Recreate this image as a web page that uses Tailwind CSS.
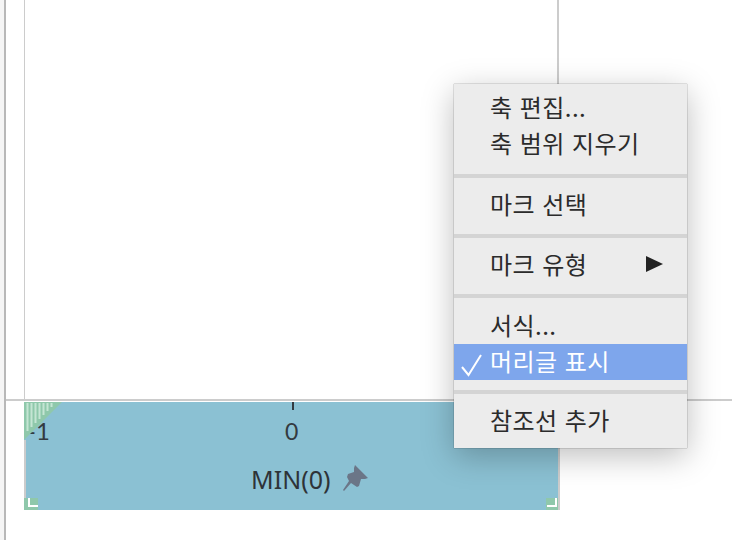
<!DOCTYPE html>
<html lang="ko">
<head>
    <meta charset="UTF-8" />
    <title>Axis menu</title>
    <script src="https://cdn.jsdelivr.net/npm/@tailwindcss/browser@4"></script>
</head>
<body class="bg-white">
    <div class="relative w-[732px] h-[540px] overflow-hidden flex bg-white font-['Noto_Sans_CJK_KR','Noto_Sans',sans-serif]">
        <!-- left pane edge -->
        <div class="w-[6px] h-full shrink-0 bg-[#f5f5f5] border-r-2 border-[#b8b8b8]"></div>

        <div class="flex-1 flex flex-col">
            <!-- plot area -->
            <div class="h-[399px] shrink-0 pl-[18px]">
                <div class="w-[535px] h-full border-l border-r-2 border-[#cccccc] bg-white"></div>
            </div>
            <div class="h-[2px] shrink-0 bg-[#cccccc]"></div>
            <div class="h-px shrink-0"></div>

            <!-- axis band -->
            <div class="pl-[18px]">
                <div class="relative w-[536px] h-[108px] bg-[#8bc1d3] border-r-2 border-[#cccccc] text-[#333a40]">
                    <!-- ticks -->
                    <div class="absolute left-[268px] top-0 w-[2px] h-[8px] bg-[#333a40]"></div>
                    <div class="absolute left-[3px] top-[14px] font-['Lato'] text-[24px] leading-[30px]">-1</div>
                    <div class="absolute left-[261px] top-[14px] font-['Lato'] text-[23px] leading-[30px]">0</div>
                    <!-- selected corner, sits over the -1 label -->
                    <svg class="absolute left-0 top-0" width="38" height="38" viewBox="0 0 38 38">
                        <path d="M0 0H38L0 38Z" fill="#8fc8ab" />
                        <path d="M3.500 1V29M7.500 1V25M11.500 1V21M15.500 1V17M19.500 1V13M23.500 1V9M27.500 1V5" stroke="#c5e5d4" stroke-width="2" fill="none" />
                    </svg>
                    <div class="absolute left-0 top-[38px] w-[2px] h-[58px] bg-[#cccccc]"></div>
                    <!-- axis title -->
                    <div class="absolute left-[227px] top-[60px] flex items-center gap-[13px]">
                        <span class="font-['Noto_Sans'] text-[25px] leading-[34px] text-[#2e3338]">MIN(0)</span>
                        <svg class="-mt-[2px]" width="26" height="28" viewBox="13 4 26 28">
                            <path d="M25 5 38 18 35 19 31 19 29 26 27 27 21 23 14 31 13 30 19 21 17 17 18 14 24 12 24 8Z" fill="#6b7687" />
                        </svg>
                    </div>
                    <!-- resize corners -->
                    <div class="absolute left-0 bottom-0 w-[14px] h-[12px] bg-[#8fc8ab]"></div>
                    <div class="absolute left-[4px] bottom-[3px] w-[10px] h-[9px] border-l-2 border-b-2 border-white"></div>
                    <div class="absolute right-0 bottom-0 w-[12px] h-[12px] bg-[#8fc8ab]"></div>
                    <div class="absolute right-[1px] bottom-[3px] w-[10px] h-[9px] border-r-2 border-b-2 border-white"></div>
                </div>
            </div>
        </div>

        <!-- context menu -->
        <div class="absolute left-[454px] top-[84px] w-[233px] h-[364px] pt-[6px] bg-[#ececec] text-[24px] tracking-[0.45px] leading-[34px] text-[#2b2b2b] shadow-[0_0_1px_rgba(0,0,0,0.6),0_8px_30px_rgba(0,0,0,0.26)]">
            <div class="h-[36px] pl-[36px] whitespace-nowrap">축 편집...</div>
            <div class="h-[36px] pl-[36px] whitespace-nowrap">축 범위 지우기</div>
            <div class="h-[4px] mt-[12px] mb-[9px] bg-[#d4d4d4]"></div>
            <div class="h-[36px] pl-[36px] whitespace-nowrap">마크 선택</div>
            <div class="h-[4px] mt-[11px] mb-[9px] bg-[#d4d4d4]"></div>
            <div class="h-[36px] pl-[36px] pr-[24px] flex items-start justify-between whitespace-nowrap">
                <span>마크 유형</span>
                <svg class="mt-[9px]" width="17" height="16" viewBox="0 0 17 16"><path d="M0 0 17 8 0 16Z" fill="#222222" /></svg>
            </div>
            <div class="h-[4px] mt-[11px] mb-[10px] bg-[#d4d4d4]"></div>
            <div class="h-[36px] pl-[36px] whitespace-nowrap">서식...</div>
            <div class="h-[36px] pl-[36px] bg-[#7ea6ec] text-white whitespace-nowrap relative">
                <svg class="absolute left-[7px] top-[9px]" width="22" height="24" viewBox="0 0 22 24">
                    <path d="M1 14 7.500 22 20 2" stroke="#ffffff" stroke-width="2" fill="none" />
                </svg>
                머리글 표시
            </div>
            <div class="h-[4px] mt-[10px] mb-[9px] bg-[#d4d4d4]"></div>
            <div class="h-[36px] pl-[36px] whitespace-nowrap">참조선 추가</div>
        </div>
    </div>
</body>
</html>
